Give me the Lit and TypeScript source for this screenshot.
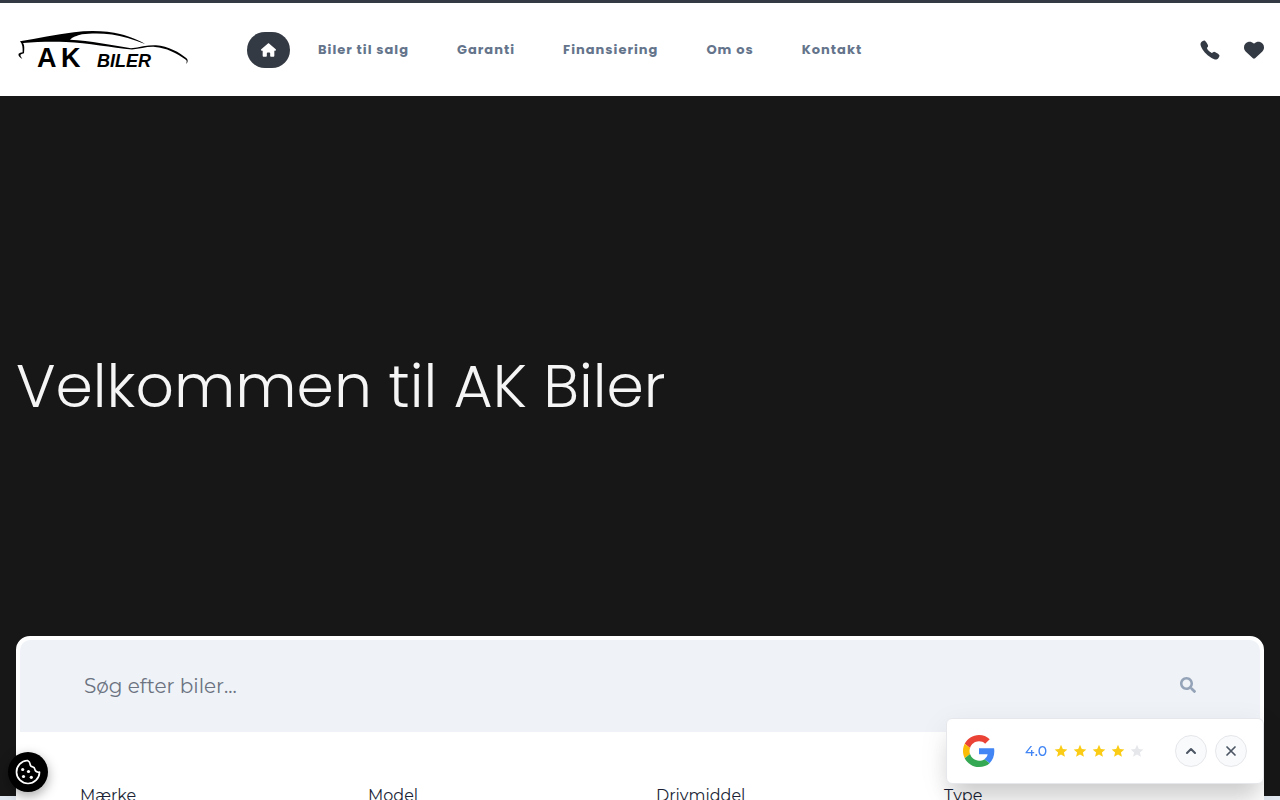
import { LitElement, html, css, svg } from "lit";
import { customElement } from "lit/decorators.js";

const house = svg`<path d="M575.8 255.5c0 18-15 32.1-32 32.1h-32l.7 160.2c0 2.7-.2 5.4-.5 8.1V472c0 22.1-17.9 40-40 40H456c-1.1 0-2.2 0-3.3-.1c-1.4 .1-2.8 .1-4.2 .1H416 392c-22.1 0-40-17.9-40-40V448 384c0-17.7-14.3-32-32-32H256c-17.7 0-32 14.3-32 32v64 24c0 22.1-17.9 40-40 40H160 128.1c-1.5 0-3-.1-4.5-.2c-1.2 .1-2.4 .2-3.6 .2H104c-22.1 0-40-17.9-40-40V360c0-.9 0-1.9 .1-2.8V287.6H32c-18 0-32-14-32-32.1c0-9 3-17 10-24L266.4 8c7-7 15-8 22-8s15 2 21 7L564.8 231.5c8 7 12 15 11 24z"/>`;
const phone = svg`<path d="M391 480c-19.52 0-46.94-7.06-88-30-49.93-28-88.55-53.85-138.21-103.38C116.91 298.77 93.61 267.79 61 208.45c-36.84-67-30.56-102.12-23.54-117.13C45.82 73.38 58.16 62.65 74.11 52a176.3 176.3 0 0128.64-15.2c1-.43 1.93-.84 2.76-1.21 4.95-2.23 12.45-5.6 21.95-2 6.34 2.38 12 7.25 20.86 16 18.17 17.92 43 57.83 52.16 77.43 6.15 13.21 10.22 21.93 10.23 31.71 0 11.45-5.76 20.28-12.75 29.81-1.31 1.79-2.61 3.5-3.87 5.16-7.61 10-9.28 12.89-8.18 18.05 2.23 10.37 18.86 41.24 46.19 68.51s57.31 42.85 67.72 45.07c5.38 1.15 8.33-.59 18.65-8.47 1.48-1.13 3-2.3 4.59-3.47 10.66-7.93 19.08-13.54 30.26-13.54h.06c9.73 0 18.06 4.22 31.86 11.18 18 9.08 59.11 33.59 77.14 51.78 8.77 8.84 13.66 14.48 16.05 20.81 3.6 9.53.21 17-2 22-.37.83-.78 1.74-1.21 2.75a176.49 176.49 0 01-15.29 28.58c-10.63 15.9-21.4 28.21-39.38 36.58A67.42 67.42 0 01391 480z"/>`;
const heart = svg`<path d="M47.6 300.4L228.3 469.1c7.5 7 17.4 10.9 27.7 10.9s20.2-3.9 27.7-10.9L464.4 300.4c30.4-28.3 47.6-68 47.6-109.5v-5.8c0-69.9-50.5-129.5-119.4-141C347 36.5 300.6 51.4 268 84L256 96 244 84c-32.6-32.6-79-47.5-124.6-39.9C50.5 55.6 0 115.2 0 185.1v5.8c0 41.5 17.2 81.2 47.6 109.5z"/>`;
const search = svg`<path d="M505 442.7L405.3 343c-4.5-4.5-10.6-7-17-7H372c27.6-35.3 44-79.7 44-128C416 93.1 322.9 0 208 0S0 93.1 0 208s93.1 208 208 208c48.3 0 92.7-16.4 128-44v16.3c0 6.4 2.5 12.5 7 17l99.7 99.7c9.4 9.4 24.6 9.4 33.9 0l28.3-28.3c9.4-9.4 9.4-24.6.1-34zM208 336c-70.7 0-128-57.2-128-128 0-70.7 57.2-128 128-128 70.7 0 128 57.2 128 128 0 70.7-57.2 128-128 128z"/>`;

@customElement("site-header")
class SiteHeader extends LitElement {
  static styles = css`
    :host {
      display: flex;
      align-items: center;
      box-sizing: border-box;
      padding: 4px 16px;
      min-height: 96px;
      border-top: 3px solid #343a43;
      background: #fff;
    }
    a { color: inherit; text-decoration: none; }
    svg { display: block; }
    .logo { flex: none; margin-right: 56px; color: #000; }
    .mark { font-family: "Liberation Sans", Arial, sans-serif; font-weight: 700; }
    .nav { display: flex; align-items: center; flex: 1; gap: 4px; }
    .item {
      padding: 8px 22px;
      font: 700 13px/20px Poppins, Inter, sans-serif;
      letter-spacing: 1px;
      color: #64748b;
      white-space: nowrap;
    }
    .home {
      padding: 11px 14px;
      border-radius: 18px;
      background: #343a43;
      color: #fff;
      margin-right: 2px;
    }
    .actions { display: flex; align-items: center; gap: 24px; color: #343a43; }
  `;
  render() {
    return html`
      <a class="logo" href="#" aria-label="AK Biler">
        <svg width="175" height="62" viewBox="16 18 175 62">
          <path d="M20 40.300C38 37.500 55 33.500 74 31.200C90 29 108 29.800 120 33C131 35.800 139 39.300 145 43C133 38 122 34.800 112 33.400C101 32 90 32.200 82 33.300C77 34.500 72 36.500 70 38.800C90 40 112 44 131 47.300C140 46 148 43.900 156 44.200C168 45 180 51.500 186.500 57.300Q189 60 186.200 63C186.500 61 187.500 60 185.500 58.400C177 52 166 46.700 155 45.900C147 45.300 140 47.800 132 48.600C112 47 88 41.500 66 41C50 40.500 36 41 23 41.900C24.500 44 24.500 47 24 52.300C21.500 53.200 20 53 20.500 55L22.300 58C19 56 18 54.500 18.600 52.800Q20 51.500 22.600 51.300C22.800 47 22.600 43 20 40.300Z" fill="currentColor"/>
          <text class="mark" x="37" y="66" font-size="27" fill="currentColor">A</text>
          <text class="mark" x="61" y="66" font-size="27" fill="currentColor">K</text>
          <text class="mark" x="97" y="66" font-size="18" font-style="italic" fill="currentColor">BILER</text>
        </svg>
      </a>
      <nav class="nav">
        <a class="home" href="#" aria-label="Forside"><svg width="15" height="14" viewBox="0 0 576 512" fill="currentColor">${house}</svg></a>
        ${["Biler til salg", "Garanti", "Finansiering", "Om os", "Kontakt"].map(
          (t) => html`<a class="item" href="#">${t}</a>`
        )}
      </nav>
      <div class="actions">
        <a href="#" aria-label="Ring"><svg width="20" height="20" viewBox="20 20 472 472" fill="currentColor">${phone}</svg></a>
        <a href="#" aria-label="Favoritter"><svg width="20" height="20" viewBox="0 0 512 512" fill="currentColor">${heart}</svg></a>
      </div>
    `;
  }
}

@customElement("car-search")
class CarSearch extends LitElement {
  static styles = css`
    :host {
      display: block;
      border: 4px solid #fff;
      border-radius: 14px;
      background: #fff;
      font-family: Montserrat, Inter, sans-serif;
    }
    .bar {
      display: flex;
      align-items: center;
      padding: 0 64px;
      background: #eff3f8;
      border-radius: 10px 10px 0 0;
    }
    .query {
      flex: 1;
      min-width: 0;
      height: 92px;
      padding: 0;
      border: 0;
      outline: 0;
      background: none;
      font: 400 20px/28px Montserrat, Inter, sans-serif;
      color: #1e293b;
    }
    .query::placeholder { color: #6b7280; opacity: 1; }
    .go { padding: 0 0 2px; border: 0; background: none; color: #94a3b8; }
    .go svg { display: block; }
    .filters {
      display: grid;
      grid-template-columns: repeat(4, 1fr);
      gap: 32px;
      padding: 52px 60px 60px;
    }
    .field { display: flex; flex-direction: column; gap: 8px; color: #1a1f36; font-size: 16px; line-height: 24px; }
    .pick { height: 44px; border: 1px solid #cbd5e1; border-radius: 6px; background: #fff; font: inherit; }
  `;
  render() {
    return html`
      <div class="bar">
        <input class="query" type="text" placeholder="Søg efter biler..." aria-label="Søg efter biler" />
        <button class="go" aria-label="Søg"><svg width="16" height="16" viewBox="0 0 512 512" fill="currentColor">${search}</svg></button>
      </div>
      <div class="filters">
        ${["Mærke", "Model", "Drivmiddel", "Type"].map(
          (t) => html`<label class="field">${t}<select class="pick"></select></label>`
        )}
      </div>
    `;
  }
}

@customElement("google-rating")
class GoogleRating extends LitElement {
  static styles = css`
    :host {
      display: flex;
      align-items: center;
      justify-content: space-between;
      box-sizing: border-box;
      padding: 16px;
      border: 1px solid #e5e7eb;
      border-radius: 6px;
      background: #fff;
      box-shadow: 0 20px 25px -5px rgba(0, 0, 0, 0.15), 0 8px 30px rgba(0, 0, 0, 0.08);
    }
    svg { display: block; }
    .score { display: flex; align-items: center; gap: 6px; font: 500 14px/20px Montserrat, Inter, sans-serif; color: #4285f4; }
    .stars { display: flex; gap: 3px; color: #facc15; }
    .off { color: #e5e7eb; }
    .buttons { display: flex; gap: 8px; }
    .round {
      display: flex;
      align-items: center;
      justify-content: center;
      width: 32px;
      height: 32px;
      padding: 0;
      border: 1px solid #e5e7eb;
      border-radius: 50%;
      background: #f9fafb;
      color: #4b5563;
    }
  `;
  render() {
    return html`
      <svg width="32" height="32" viewBox="0 0 48 48" role="img" aria-label="Google">
        <path fill="#EA4335" d="M24 9.5c3.54 0 6.71 1.22 9.21 3.6l6.85-6.85C35.9 2.38 30.47 0 24 0 14.62 0 6.51 5.38 2.56 13.22l7.98 6.19C12.43 13.72 17.74 9.5 24 9.5z"/>
        <path fill="#4285F4" d="M46.98 24.55c0-1.57-.15-3.09-.38-4.55H24v9.02h12.94c-.58 2.96-2.26 5.48-4.78 7.18l7.73 6c4.51-4.18 7.09-10.36 7.09-17.65z"/>
        <path fill="#FBBC05" d="M10.53 28.59c-.48-1.45-.76-2.99-.76-4.59s.27-3.14.76-4.59l-7.98-6.19C.92 16.46 0 20.12 0 24c0 3.88.92 7.54 2.56 10.78l7.97-6.19z"/>
        <path fill="#34A853" d="M24 48c6.48 0 11.93-2.13 15.89-5.81l-7.73-6c-2.15 1.45-4.92 2.3-8.16 2.3-6.26 0-11.57-4.22-13.47-9.91l-7.98 6.19C6.51 42.62 14.62 48 24 48z"/>
      </svg>
      <div class="score">
        <span>4.0</span>
        <div class="stars">
          ${[1, 2, 3, 4, 5].map(
            (n) => html`<svg class=${n > 4 ? "off" : "on"} width="16" height="16" viewBox="-1 -1 22 22" fill="currentColor"><path d="M10 1.500l2.500 5.800 6.200.5-4.700 4.100 1.400 6.100L10 14.800l-5.400 3.200L6 11.900 1.300 7.800l6.200-.5z"/></svg>`
          )}
        </div>
      </div>
      <div class="buttons">
        <button class="round" aria-label="Vis"><svg width="12" height="12" viewBox="0 0 12 12" fill="none" stroke="currentColor" stroke-width="2" stroke-linecap="round" stroke-linejoin="round"><path d="M2 8l4-4 4 4"/></svg></button>
        <button class="round" aria-label="Luk"><svg width="12" height="12" viewBox="0 0 12 12" fill="none" stroke="currentColor" stroke-width="1.700" stroke-linecap="round"><path d="M2 2l8 8M10 2l-8 8"/></svg></button>
      </div>
    `;
  }
}

@customElement("app-root")
class AppRoot extends LitElement {
  static styles = css`
    :host {
      display: block;
      height: 100vh;
      overflow: hidden;
      background: #e2e8f0;
    }
    .hero {
      display: flex;
      align-items: center;
      box-sizing: border-box;
      min-height: 700px;
      padding: 0 16px 120px;
      background: #171717;
    }
    .title {
      margin: 0;
      font: 300 60px/72px Poppins, Inter, sans-serif;
      color: #f5f5f5;
    }
    .panel { margin: -160px 16px 0; }
    .rating { position: fixed; right: 16px; bottom: 16px; width: 318px; }
    .cookie {
      position: fixed;
      left: 8px;
      bottom: 8px;
      display: flex;
      align-items: center;
      justify-content: center;
      width: 40px;
      height: 40px;
      padding: 0;
      border: 0;
      border-radius: 50%;
      background: #000;
      color: #fff;
      box-shadow: 0 4px 12px rgba(0, 0, 0, 0.35);
    }
  `;
  render() {
    return html`
      <site-header></site-header>
      <main>
        <section class="hero"><h1 class="title">Velkommen til AK Biler</h1></section>
        <car-search class="panel"></car-search>
      </main>
      <google-rating class="rating"></google-rating>
      <button class="cookie" aria-label="Cookies">
        <svg width="26" height="26" viewBox="0 0 26 26" fill="none" stroke="currentColor" stroke-width="1.700" stroke-linejoin="round">
          <path d="M12.500 1.500A11.500 11.500 0 1 0 24.500 13.200C22 13.500 20.200 12.200 19.800 10.200C19.600 8.900 19 8.100 17.700 7.900C15.700 7.500 15.100 6.300 15 4.700C14.900 3.500 14 2.200 12.500 1.500Z"/>
          <g fill="currentColor" stroke="none"><circle cx="7.700" cy="10.500" r="1.600"/><circle cx="13.500" cy="12.500" r="1.600"/><circle cx="8.500" cy="17.500" r="1.600"/><circle cx="16.300" cy="18.300" r="1.600"/></g>
        </svg>
      </button>
    `;
  }
}
